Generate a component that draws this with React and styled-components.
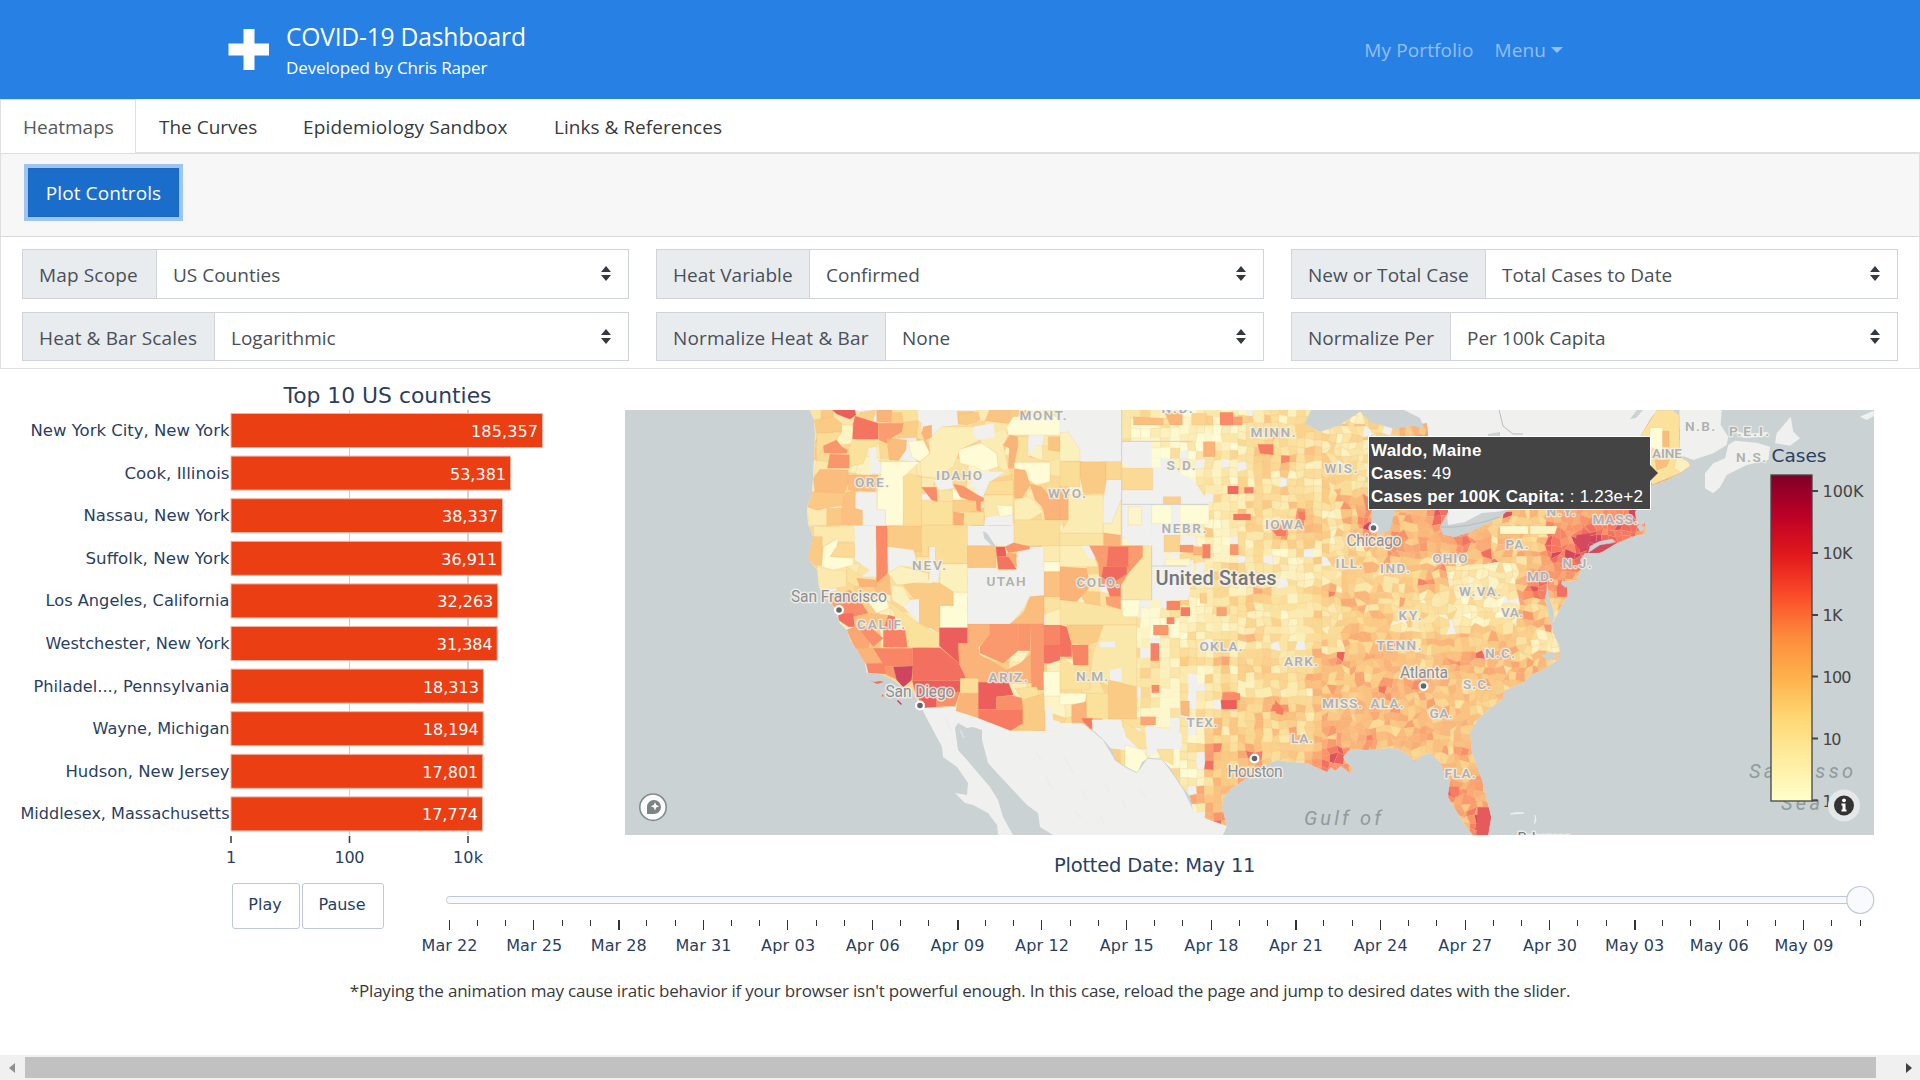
import React from "react";
import styled, { createGlobalStyle } from "styled-components";

const UI = '"Open Sans", "Noto Sans", sans-serif';
const PLOT = '"DejaVu Sans", Verdana, sans-serif';

const GlobalStyle = createGlobalStyle`
  * { box-sizing: border-box; }
  html, body { margin: 0; padding: 0; background: #fff; overflow: hidden; }
  body { font-family: ${UI}; color: #373a3c; }
`;

const Page = styled.div`
  display: flex;
  flex-direction: column;
  width: 1920px;
  height: 1080px;
  background: #fff;
`;

const T = styled.span`
  font-size: ${(p) => p.$size || 19}px;
  letter-spacing: ${(p) => p.$ls || 0}px;
  line-height: 1;
  white-space: nowrap;
`;

/* ---------- header ---------- */
const Header = styled.header`
  display: flex;
  align-items: center;
  justify-content: space-between;
  height: 99px;
  flex: none;
  padding: 0 357px 0 228px;
  background: #2780e3;
  color: #fff;
`;
const Brand = styled.div`
  display: flex;
  align-items: center;
  gap: 17px;
`;
const BrandText = styled.div`
  display: flex;
  flex-direction: column;
  gap: 10px;
  padding-top: 2px;
`;
const NavLinks = styled.nav`
  display: flex;
  align-items: center;
  gap: 21px;
  color: rgba(255, 255, 255, 0.5);
  padding-top: 2px;
`;
const MenuLink = styled.span`
  display: flex;
  align-items: center;
  gap: 5px;
`;
const Caret = styled.i`
  border: 6px solid transparent;
  border-top-color: currentColor;
  border-bottom: 0;
  margin-top: -2px;
`;

/* ---------- tabs ---------- */
const Tabs = styled.div`
  display: flex;
  height: 54px;
  flex: none;
  border-bottom: 1px solid #dddfe2;
`;
const Tab = styled.div`
  display: flex;
  align-items: center;
  width: ${(p) => p.$w}px;
  padding: ${(p) => (p.$active ? 1 : 3)}px 0 0 ${(p) => (p.$active ? 22 : 23)}px;
  height: ${(p) => (p.$active ? 54 : 53)}px;
  border: solid #dddfe2;
  border-width: ${(p) => (p.$active ? "1px 1px 0 1px" : "0")};
  color: ${(p) => (p.$active ? "#55595c" : "#373a3c")};
  background: #fff;
`;

/* ---------- controls card ---------- */
const Card = styled.section`
  flex: none;
  height: 216px;
  border: 1px solid #dfdfdf;
  border-top-width: 0;
`;
const CardHeader = styled.div`
  height: 84px;
  padding: 14px 27px;
  background: #f7f7f7;
  border-top: 1px solid #dfdfdf;
  border-bottom: 1px solid #d8d8d8;
`;
const PlotButton = styled.button`
  display: flex;
  align-items: center;
  justify-content: center;
  width: 151px;
  height: 49px;
  margin: 0;
  padding: 2px 0 0;
  border: 1px solid #1967be;
  background: #1a6dca;
  color: #fff;
  font-family: ${UI};
  box-shadow: 0 0 0 4px #9dc5f3;
`;
const Fields = styled.div`
  display: grid;
  grid-template-columns: 607px 608px 607px;
  grid-template-rows: 50px 49px;
  gap: 13px 27px;
  padding: 12px 21px 0;
`;
const Field = styled.div`
  display: flex;
  border: 1px solid #ced4da;
`;
const Addon = styled.div`
  display: flex;
  align-items: center;
  width: ${(p) => p.$w}px;
  padding: 3px 0 0 16px;
  background: #e9ecef;
  border-right: 1px solid #ced4da;
  color: #495057;
`;
const Select = styled.div`
  display: flex;
  flex: 1;
  align-items: center;
  justify-content: space-between;
  padding: 3px 16px 0 16px;
  color: #495057;
  svg { margin-top: -3px; }
`;

/* ---------- plot ---------- */
const PlotArea = styled.section`
  display: flex;
  height: 505px;
  flex: none;
`;
const MapColumn = styled.div`
  display: flex;
  flex-direction: column;
  padding-top: 41px;
  width: 1249px;
`;
const MapFrame = styled.div`
  position: relative;
  flex: none;
  height: 425px;
  overflow: hidden;
  background: #cad2d3;
  svg { display: block; }
`;
const DateTitle = styled.div`
  display: flex;
  padding: 21px 0 0 429px;
  color: #2a3f5f;
  font-family: ${PLOT};
`;
const Tooltip = styled.div`
  position: absolute;
  left: 743px;
  top: 26px;
  width: 283px;
  height: 74px;
  padding: 2px 3px 0 2px;
  border: 1px solid #fff;
  background: #444;
  color: #fff;
  font: 17px/23px "Liberation Sans", Arial, sans-serif;
  letter-spacing: 0.22px;
  white-space: nowrap;
  &::after {
    content: "";
    position: absolute;
    left: 281px;
    top: 28px;
    border: 8px solid transparent;
    border-left-color: #444;
    border-right: 0;
  }
`;
const ControlRow = styled.div`
  display: flex;
  height: 92px;
  flex: none;
  padding: 9px 0 0 232px;
`;
const PlayButton = styled.button`
  display: flex;
  justify-content: center;
  width: ${(p) => p.$w}px;
  height: 46px;
  margin: 0 2px 0 0;
  padding: 13px 2px 0 0;
  border: 1px solid #bec8d9;
  border-radius: 3px;
  background: #fff;
  color: #2a3f5f;
  font-family: ${PLOT};
`;
const SliderSvg = styled.svg`
  display: block;
  margin-left: 44px;
  overflow: visible;
`;
const Note = styled.p`
  display: flex;
  justify-content: center;
  margin: 0;
  padding-top: 16px;
  flex: 1;
`;
const ScrollBar = styled.footer`
  display: flex;
  align-items: center;
  justify-content: space-between;
  flex: none;
  height: 25px;
  padding: 0 8px 0 9px;
  background: #f0f0f0;
`;
const ScrollThumb = styled.div`
  width: 1851px;
  height: 21px;
  margin-right: 20px;
  background: #c1c1c1;
`;
const ScrollArrow = styled.i`
  border: solid transparent;
  border-width: 5.5px 6px;
  ${(p) => (p.$right
    ? "border-left-color:#404040;border-right-width:0;"
    : "border-right-color:#909090;border-left-width:0;")}
`;

/* ---------- map data ---------- */
const RAMP = [
  [240, 240, 239], [253, 252, 214], [251, 241, 190], [250, 225, 156], [250, 203, 133],
  [250, 179, 121], [250, 150, 108], [247, 122, 98], [236, 94, 92], [207, 68, 97],
];
const shade = (v) => {
  if (v <= 0) return "rgb(240,240,239)";
  const c = Math.min(9, Math.max(1, v));
  const i = Math.min(8, Math.floor(c));
  const f = c - i;
  return `rgb(${RAMP[i].map((a, k) => Math.round(a + (RAMP[i + 1][k] - a) * f)).join(",")})`;
};
const hash = (a, b, s) => {
  let h = (Math.imul(a + 101, 374761393) + Math.imul(b + 57, 668265263) + Math.imul(s, 2246822519)) | 0;
  h = Math.imul(h ^ (h >>> 13), 1274126177);
  h ^= h >>> 16;
  return ((h >>> 0) % 10000) / 10000;
};

const USA =
  "810,410 814,420 815,433 814,460 813,480 812,495 807,507 808,523 813,537 808,558 817,570 819,587 825,597 833,605 838,617 840,623 847,630 850,640 857,650 865,663 867,673 880,674 893,680 903,687 913,692 917,700 922,708 956,706 956,711 978,718 1011,731 1058,731 1058,723 1082,723 1092,730 1103,740 1112,750 1115,760 1125,767 1137,773 1142,762 1148,758 1162,759 1170,768 1182,787 1190,797 1193,810 1207,819 1227,826 1222,808 1223,798 1232,788 1247,778 1260,768 1277,760 1293,762 1307,763 1320,769 1327,772 1331,767 1335,771 1341,766 1350,773 1353,769 1345,761 1343,757 1348,751 1357,749 1367,750 1390,748 1401,750 1408,755 1415,761 1423,755 1430,753 1440,762 1443,770 1450,780 1448,797 1457,812 1465,825 1473,835 1488,835 1491,817 1482,780 1472,753 1470,733 1477,720 1490,708 1502,700 1505,690 1523,683 1530,675 1543,670 1560,658 1560,648 1553,633 1552,627 1550,622 1553,623 1560,608 1567,597 1567,587 1563,583 1577,580 1582,567 1580,560 1585,553 1600,553 1617,543 1637,535 1646,534 1645,523 1641,525 1637,523 1635,512 1652,485 1667,480 1680,473 1691,465 1680,455 1679,415 1673,410 1657,410 1650,420 1640,437 1640,470 1600,500 1510,509 1505,513 1500,517 1470,532 1455,537 1444,534 1440,527 1448,512 1448,490 1420,440 1428,436 1427,423 1395,428 1372,422 1360,412 1340,425 1320,432 1305,424 1311,410";

const SPOTS = [
  [1366, 524, 9, 4.4], [1373, 530, 7, 3], [1440, 516, 9, 4.2], [1586, 545, 12, 4], [1576, 562, 15, 2.2], [1553, 563, 22, 1.8],
  [1630, 520, 14, 3], [1605, 533, 15, 2.2], [1536, 588, 10, 3.8], [1425, 685, 9, 2.6], [1336, 754, 10, 3.3],
  [1327, 765, 14, 1.4], [1255, 757, 8, 4.4], [1229, 702, 8, 4.8], [1217, 747, 6, 4.4], [1206, 763, 5, 4.6],
  [1284, 461, 7, 4], [1265, 450, 8, 3.4], [1281, 532, 7, 4],
  [1301, 516, 5, 4], [1262, 592, 7, 3.2], [1330, 592, 7, 4.6], [1424, 581, 7, 2.6], [1403, 602, 6, 3], [1390, 639, 9, 2.6],
  [1339, 658, 5, 4.6], [1384, 690, 7, 2.7], [1483, 823, 12, 3.6], [1453, 790, 8, 2.5], [1478, 657, 5, 3.4], [1491, 557, 7, 2.8],
  [1464, 537, 7, 2.6], [1444, 570, 6, 3.4], [1370, 500, 9, 3.6], [1508, 513, 5, 4], [1552, 541, 9, 2], [1560, 590, 8, 2.4],
  [1311, 680, 6, 2.6], [1278, 708, 6, 3.4], [1222, 658, 8, 3], [1247, 640, 6, 2.6], [1366, 742, 6, 2.3],
  [1197, 797, 10, 3.5],
  [1218, 822, 10, 3.5], [1395, 552, 9, 1.6], [1465, 750, 6, 2.4], [1345, 500, 10, 2], [1314, 530, 12, 2.2],
  [1528, 616, 4, 3], [1550, 628, 5, 2.8], [1500, 645, 8, 1.8], [1455, 665, 8, 1.5], [1425, 725, 8, 1.4], [1310, 448, 7, 0.8],
];
const base = (x, y) => {
  if (x < 1120) return [2.9, 0.08];
  if (y > 765 && x > 1430) return [4.9, 0];
  if (x < 1205) {
    if (y < 460) return [2, 0.12];
    if (y < 580) return [2.1, x < 1180 ? 0.3 : 0.12];
    if (y < 700) return [2.4, x > 1180 && y > 650 ? 0.35 : 0.08];
    return y > 755 ? [2.3, 0.1] : [2.2, 0.4];
  }
  if (x < 1240) return y < 560 ? [2.4, 0.04] : y > 715 ? [3.6, 0] : [2.8, 0.04];
  if (x < 1315) return y < 480 ? [2.8, 0.02] : y < 550 ? [3.1, 0.02] : y < 650 ? [2.6, 0.05] : y < 700 ? [3.1, 0.02] : [4, 0];
  if (x < 1400 && y < 500) return [2.9, 0.03];
  if (y > 650) return x > 1420 ? [4.2, 0] : [4.4, 0];
  if (x < 1345) return y > 600 ? [3.2, 0.02] : [2.7, 0.01];
  if (x > 1395 && x < 1455 && y > 590 && y < 630) return [2.6, 0.03];
  if (x > 1445 && x < 1520 && y > 565 && y < 625) return [2.3, 0.02];
  if (x > 1490 && y < 555) return x < 1545 ? [3.7, 0] : [5.4, 0];
  if (x > 1535 && y > 630) return [2.6, 0];
  if (y < 560 && x > 1385) return [4.9, 0];
  return [3.9, 0];
};
const CELLS = (() => {
  const out = [];
  const grid = (x0, x1, w, h, jit, seed, merge = 0) => {
    const n = Math.round((x1 - x0) / w);
    const rows = Math.ceil(430 / h);
    const vx = (i, j) => [
      x0 + i * w + (i > 0 && i < n ? (hash(i, j, seed) - 0.5) * w * jit : 0),
      408 + j * h + (hash(i, j, seed + 1) - 0.5) * h * jit,
    ];
    for (let i = 0; i < n; i++) {
      for (let j = 0; j < rows; j++) {
        const x = x0 + (i + 0.5) * w;
        const y = 408 + (j + 0.5) * h;
        const [b, miss] = base(x, y);
        const joined = hash(i, j, seed + 5);
        const ci = joined < merge ? i - 1 : i;
        const cj = joined > 1 - merge ? j - 1 : j;
        let v = b + (hash(ci, cj, seed + 2) + hash(ci, cj, seed + 3) - 1) * 1.7;
        SPOTS.forEach(([sx, sy, r, a]) => {
          const d = ((x - sx) ** 2 + (y - sy) ** 2) / (r * r);
          if (d < 6) v += a * Math.exp(-d);
        });
        v = hash(ci, cj, seed + 4) < miss ? 0 : Math.max(1, v);
        const pts = [vx(i, j), vx(i + 1, j), vx(i + 1, j + 1), vx(i, j + 1)];
        out.push([pts.map((p) => `${p[0].toFixed(1)},${p[1].toFixed(1)}`).join(" "), shade(v), v === 0 || ci !== i || cj !== j]);
      }
    }
  };
  grid(800, 1121, 18.9, 17, 0.55, 3);
  grid(1121, 1180, 9.83, 10, 0.1, 17, 0.28);
  grid(1180, 1238, 8.3, 8.6, 0.22, 21, 0.15);
  grid(1238, 1322, 8.4, 7.8, 0.42, 29, 0.12);
  grid(1322, 1700, 7, 6.8, 0.8, 43, 0.1);
  return out;
})();

const WEST = [
  ["583,60 640,50 665,70 665,95 590,100", 4], ["637,30 705,30 708,45 690,58 670,50 650,42", 8], ["705,48 775,70 775,118 697,118 700,70", 7.2],
  ["775,70 850,70 845,95 820,110 800,130 778,120", 5.8], ["770,30 815,30 815,68 770,65", 5], ["815,38 845,38 850,70 815,70", 4],
  ["590,100 665,95 650,120 610,138 590,180", 3.2], ["697,118 778,120 768,140 745,145 730,190 690,200 685,150", 3],
  ["800,115 860,120 858,150 835,182 808,180", 4.6], ["610,138 650,120 665,140 683,150 680,160 640,160 612,158", 6], ["630,162 688,165 688,205 622,205", 6],
  ["600,208 685,210 685,250 670,285 585,280 580,235", 4.6], ["575,275 672,280 672,315 590,330 560,320", 4.1], ["620,325 665,325 665,376 620,376", 4.1],
  ["665,325 675,280 705,270 705,325 728,330 728,376 665,376", 4.4], ["685,225 775,225 765,275 685,270", 4.6], ["708,277 770,277 770,328 797,330 797,376 728,376 728,330 708,325", 0],
  ["745,145 768,140 770,180 783,188 783,222 750,220 752,190", 0], ["783,185 900,185 850,230 850,376 797,376 797,330 772,328 772,275 783,222", 1],
  ["850,230 870,222 905,232 905,376 850,376", 3.2], ["865,125 910,120 930,160 900,185 875,170", 1], ["905,30 1010,30 1015,75 965,80 925,115 905,90", 0],
  ["900,185 930,160 925,120 965,80 1060,80 1080,120 1020,150 1000,200 945,235 905,230", 2.2],
  ["1080,120 1150,85 1165,105 1150,135 1165,205 1155,215 1135,200 1130,160 1085,130", 2.3],
  ["905,232 945,235 940,262 905,262", 2.4], ["952,270 997,270 998,305 952,305", 2.8],
  ["1015,45 1075,35 1080,60 1040,75 1015,70", 4], ["1060,80 1120,70 1125,110 1080,120 1060,110", 0], ["910,80 935,75 935,110 915,122 905,100", 5],
  ["1015,150 1060,135 1085,130 1130,160 1135,200 1090,215 1065,200 1020,190", 1], ["1085,215 1155,215 1110,245 1090,290 1065,290 1065,260 1040,265", 0],
  ["940,240 995,235 1000,265 960,270", 0], ["1110,245 1180,240 1180,285 1092,285", 3.2], ["1092,285 1180,285 1178,345 1140,350 1092,350", 2.6],
  ["905,300 998,305 998,376 905,376", 3], ["905,262 950,262 952,305 935,300", 6.4], ["997,265 1020,275 1025,300 998,300", 1],
  ["1000,300 1070,300 1070,335 1000,335", 3.8], ["1030,338 1092,335 1092,376 1030,376", 3],
  ["1000,252 1030,258 1065,280 1092,295 1090,305 1045,300 1020,290", 6], ["1068,300 1082,300 1082,335 1070,330", 6], ["1000,335 1032,340 1030,376 1000,376", 5.2],
  ["1095,350 1178,345 1178,376 1093,376", 0], ["1130,315 1178,318 1178,345 1140,350", 1], ["1160,80 1180,50 1300,45 1320,60 1320,105 1165,105", 1],
  ["1193,110 1225,110 1225,170 1290,187 1183,187", 3],
  ["1170,105 1193,110 1193,140 1180,205 1165,205 1168,145 1150,135", 5], ["1225,110 1250,105 1250,135 1225,170", 0], ["1285,110 1320,110 1320,155 1285,150", 4.3],
  ["1183,187 1290,187 1290,245 1250,255 1225,240 1220,215 1183,205", 1], ["1183,207 1215,210 1230,255 1205,295 1183,295", 4.8],
  ["1230,252 1265,260 1290,290 1320,300 1320,360 1275,360 1270,325 1245,300", 5], ["1183,300 1220,290 1240,300 1270,335 1230,360 1183,360", 2.2],
  ["1183,360 1320,360 1320,437 1183,437", 3.1],
  ["560,320 590,330 620,330 620,376 568,376", 2.4],
  ["580,380 703,378 705,425 655,425 650,415 610,440 582,410", 2.5], ["578,410 607,410 605,498 585,495 565,475", 4], ["655,430 705,428 705,470 630,472", 3.3],
  ["590,500 640,510 680,510 680,560 597,570", 2.5], ["680,500 725,530 768,530 768,545 710,560 680,545", 3],
  ["610,440 655,415 650,440 630,470 700,475 700,495 640,510 605,500", 1], ["703,378 768,378 768,530 725,530 750,510 705,480", 0], ["768,378 802,378 803,520 770,548", 6.4],
  ["802,378 905,378 905,455 880,455 802,440", 4], ["905,376 1043,376 1043,492 945,492 945,440 925,440 925,470 905,470", 3.2],
  ["803,440 880,450 890,485 880,500 840,497 805,520", 0], ["928,440 945,440 945,492 960,500 955,545 928,545", 0], ["805,520 840,498 925,520 925,545 880,550 830,555", 2],
  ["890,470 928,470 928,520 880,505", 2.6],
  ["960,492 1043,492 1043,577 1000,577 960,550", 2], ["850,555 880,550 960,550 1000,575 1000,615 960,615 960,700 895,665 897,615", 4],
  ["1000,577 1043,577 1043,683 960,683 960,617 1000,617", 1], ["815,555 850,560 870,600 850,622 815,600", 2], ["897,597 870,600 850,620 897,670", 0],
  ["800,600 895,670 960,705 960,742 862,742 858,690 830,650", 3], ["710,535 770,540 770,560 720,560", 5], ["740,600 800,590 805,625 770,640", 1],
  ["630,590 690,570 725,610 665,635 635,615", 5.6], ["665,610 725,610 745,640 700,650 665,635", 6.4], ["655,640 700,640 705,680 685,680 655,660", 7.4],
  ["700,650 745,640 805,645 790,690 750,680 720,690 705,680", 4.4],
  ["680,690 705,680 750,720 745,745 705,745", 5.4], ["720,690 750,680 790,715 760,740", 6.3], ["805,645 825,650 825,690 790,690", 7], ["790,690 855,690 862,742 790,742", 6.8],
  ["705,745 760,745 795,790 735,790", 5], ["760,745 877,745 877,798 795,800", 6.6], ["738,790 792,790 800,822 745,820", 6.6], ["795,800 820,800 830,838 800,825", 6],
  ["877,743 960,743 1017,790 1038,835 1025,842 877,842", 7.4], ["958,683 1043,683 1043,730 1015,730 1017,790 958,738", 8], ["877,842 1022,842 1022,875 890,895", 8],
  ["890,875 950,890 950,922 905,925", 8], ["950,880 1020,875 1005,918 950,920", 6.2], ["820,800 878,798 875,840 850,862 830,840", 9],
  ["1043,378 1180,378 1180,437 1043,437", 0], ["1043,437 1128,437 1128,503 1043,503", 4.3],
  ["1043,505 1128,505 1135,512 1192,510 1192,450 1232,440 1272,440 1272,585 1230,590 1200,640 1170,672 1043,672", 0],
  ["1155,440 1180,428 1230,440 1228,448 1165,458", 6], ["1160,458 1188,462 1190,500 1165,490", 5.2], ["1128,440 1155,440 1160,470 1130,470", 8], ["1130,470 1165,470 1190,508 1135,508", 7.2],
  ["1230,590 1272,587 1272,672 1170,672 1210,640", 4.6], ["1272,437 1320,437 1320,485 1272,485", 2.4], ["1272,485 1320,485 1320,515 1272,515", 1], ["1272,515 1320,515 1320,590 1272,590", 4.4],
  ["1043,672 1110,672 1110,700 1075,740 1080,765 1110,780 1160,810 1200,790 1235,760 1237,850 1075,850 1038,835 1017,790 1017,730 1043,730", 5],
  ["1110,672 1195,672 1197,750 1150,790 1080,760 1080,740 1110,700", 5.9], ["1195,672 1230,672 1230,752 1197,752", 6], ["1230,672 1272,672 1272,870 1235,870 1232,752", 5.9],
  ["1272,675 1320,675 1320,733 1272,733", 6.6], ["1272,733 1320,733 1320,780 1290,790 1272,790", 7.2], ["1020,835 1075,835 1075,880 1020,880", 3.2], ["1020,880 1075,880 1075,953 1008,932", 5],
  ["1185,865 1250,860 1265,900 1208,900", 3], ["1208,900 1272,880 1275,992 1180,990 1208,970", 4], ["1075,847 1165,847 1180,885 1130,890 1128,928 1075,928", 8],
  ["1130,890 1180,887 1205,895 1208,927 1128,927", 6.2], ["1075,928 1208,928 1208,970 1172,992 1075,955", 7], ["1270,815 1320,815 1320,888 1272,888", 1],
  ["1276,915 1295,920 1300,960 1320,965 1320,992 1276,992", 0],
];
const MID = [
  ["0,30 185,30 185,183 60,183 50,140 0,95", 0], ["0,100 25,95 60,150 60,183 0,183", 2], ["60,185 138,185 138,280 70,280 60,230", 4], ["0,185 60,185 60,260 0,260", 3.2],
  ["138,185 183,185 183,240 138,240", 3.4],
  ["0,260 25,300 25,360 0,360", 5], ["25,285 130,285 130,400 0,400 25,360", 2.3], ["140,240 183,240 183,300 155,370 130,370 130,300", 0], ["130,398 182,405 182,437 130,437", 5],
  ["0,400 130,400 130,437 0,437", 2.8], ["155,370 183,300 183,405 130,398 130,370", 2.2], ["0,437 88,437 115,500 0,500", 2.2], ["65,437 88,437 110,475 85,475", 0],
  ["183,437 275,437 275,600 183,600", 2.6], ["0,500 80,505 90,560 50,605 0,600", 5], ["88,437 248,437 248,470 205,520 180,560 120,560 115,490", 5.8],
  ["145,440 205,440 205,500 140,500", 7.2], ["130,500 200,500 200,522 155,550 125,530", 7.6], ["138,555 182,555 182,590 150,590", 7],
  ["0,600 50,605 135,620 230,630 230,675 0,675", 2.8], ["137,590 182,590 182,628 140,615", 5.6], ["182,600 240,600 235,650 190,650", 1],
  ["0,675 20,680 35,735 35,770 0,770", 7.3], ["20,675 130,675 125,720 85,735 35,730", 4], ["130,675 230,675 230,860 150,860 90,830 100,760", 2.6],
  ["35,735 85,735 85,795 40,795", 6.6], ["0,770 40,795 90,800 90,870 0,870", 3], ["120,725 165,725 165,742 120,742", 0], ["150,810 185,805 185,845 150,840", 0],
  ["145,840 230,860 230,957 145,957", 4], ["0,880 80,880 75,910 0,915", 1], ["80,880 145,880 145,955 80,955", 3], ["35,915 78,905 78,968 35,968", 5], ["65,955 97,955 95,990 70,965", 7],
  ["185,125 275,125 275,210 185,190", 0], ["275,205 330,205 400,240 450,313 275,313 275,270", 0], ["185,270 275,270 275,313 185,313", 0],
  ["185,313 275,313 275,437 205,430 185,370", 0], ["275,315 335,315 335,370 275,370", 1], ["205,320 245,320 245,375 205,375", 1.6],
  ["360,315 447,315 447,375 360,370", 1], ["335,315 360,315 360,430 275,437 275,370 335,370", 0], ["275,437 315,437 315,490 400,480 400,498 385,600 275,600", 0],
  ["310,290 362,290 362,313 310,313", 3.8], ["315,478 390,475 390,498 315,498", 1.4],
  ["95,960 185,960 190,1000 260,1040 255,1070 195,1050 150,1045 100,995", 0],
  ["185,960 290,1030 290,1050 235,1045 200,1010", 3], ["195,1035 250,1050 262,1075 230,1118 195,1100", 1], ["185,205 278,205 278,270 185,270", 3.3], ["220,50 310,55 310,75 220,75", 4.5],
  ["255,975 365,1000 365,1045 262,1068", 0], ["290,1048 340,1048 340,1095 305,1078", 3],
  ["315,40 367,40 367,75 330,75", 5], ["430,125 465,125 465,170 430,170", 5], ["320,603 360,603 360,630 320,630", 6.6], ["362,622 390,622 390,648 362,648", 7], ["320,652 343,652 343,672 320,672", 6.6],
  ["280,675 325,675 325,705 280,705", 6], ["272,730 297,730 297,782 272,782", 6.8], ["275,855 298,855 298,878 275,878", 6.4], ["242,950 287,950 287,975 242,975", 5.4], ["362,903 388,903 388,950 362,945", 4.8],
  ["312,405 360,405 360,455 312,455", 3.6], ["360,435 400,435 400,458 360,456", 6], ["427,433 451,433 451,475 427,475", 6.8], ["400,440 427,440 427,465 400,465", 5], ["510,433 535,433 535,465 510,465", 6],
  ["480,37 520,37 520,75 480,75", 6.4], ["520,50 547,50 547,75 520,75", 5.6], ["395,40 440,40 440,75 395,75", 3.6], ["593,133 640,133 640,165 600,160", 7],
  ["503,258 535,258 535,282 503,282", 7.6], ["553,262 580,262 580,280 553,280", 7], ["520,342 572,342 572,360 520,360", 7.2], ["635,388 678,388 678,408 650,408", 7],
  ["470,622 500,622 500,648 470,648", 5.6], ["420,580 440,580 440,610 420,610", 3.8], ["715,335 735,335 735,360 715,360", 7],
  ["482,900 530,900 530,927 485,927", 8], ["490,880 540,880 540,900 490,900", 6.4], ["645,900 672,930 668,945 648,940", 7], ["1162,1160 1197,1160 1197,1185 1175,1192", 7], ["1253,1222 1292,1222 1290,1305 1250,1305", 8.2],
];
const EAST = [
  ["480,110 530,30 580,30 597,45 600,165 633,195 600,220 515,255 505,200", 3], ["510,83 548,83 548,160 510,140", 1], ["548,93 567,93 567,140 548,140", 4.6], ["525,180 568,180 560,200 530,210", 4.5], ["590,175 625,180 630,200 605,218 582,205", 2],
  ["320,440 385,432 410,428 370,455 320,465", 8.8], ["290,405 330,400 330,430 300,450 285,430", 8.8], ["245,540 262,555 260,590 232,590 230,560", 7.4], ["60,378 145,378 145,402 60,402", 1.3], ["150,378 232,378 225,402 150,402", 1.8],
];

const STATES = [
  ["MONT.", 1043, 415, 47], ["N.D.", 1177, 408, 31], ["ORE.", 872, 482, 34], ["IDAHO", 959, 475, 46], ["WYO.", 1067, 493, 38], ["S.D.", 1181, 465, 29],
  ["MINN.", 1273, 432, 45], ["WIS.", 1341, 468, 33], ["NEV.", 929, 565, 34], ["UTAH", 1006, 581, 39], ["COLO.", 1098, 582, 43], ["NEBR.", 1184, 528, 45], ["IOWA", 1284, 524, 38],
  ["ILL.", 1349, 563, 27], ["IND.", 1395, 568, 30], ["OHIO", 1450, 558, 35], ["PA.", 1517, 544, 23], ["N.Y.", 1561, 511, 29], ["MASS.", 1615, 519, 45], ["MD.", 1540, 576, 26],
  ["N.J.", 1577, 563, 29], ["W.VA.", 1480, 591, 42], ["VA.", 1512, 612, 22], ["KY.", 1410, 615, 23], ["N.C.", 1500, 653, 30], ["TENN.", 1399, 645, 45], ["CALIF.", 881, 624, 48],
  ["ARIZ.", 1008, 677, 39], ["N.M.", 1092, 676, 32], ["OKLA.", 1221, 646, 43], ["ARK.", 1301, 661, 34], ["S.C.", 1477, 684, 28], ["MISS.", 1342, 703, 40], ["ALA.", 1387, 703, 33],
  ["GA.", 1441, 713, 23], ["TEX.", 1202, 722, 31], ["LA.", 1302, 738, 22], ["FLA.", 1460, 773, 31], ["MAINE", 1661, 453, 42], ["N.B.", 1700, 426, 30], ["P.E.I.", 1749, 431, 40], ["N.S.", 1751, 457, 30],
];
const CITIES = [
  ["San Francisco", 839, 597, 96, 839, 610], ["San Diego", 920, 692, 69, 920, 705.5], ["Chicago", 1374, 540.5, 55, 1373.5, 528],
  ["Atlanta", 1424, 673, 48, 1423.5, 686], ["Houston", 1255, 771.5, 55, 1254.5, 758.5],
];

const Shapes = ({ list, dx }) => (
  <g transform={`translate(${dx} 400) scale(.33333)`} stroke="#f99a5c" strokeWidth="1.6">
    {list.map(([p, v], i) => <polygon key={i} points={p} fill={shade(v)} strokeOpacity={v ? 0.28 : 0} />)}
  </g>
);

function HeatMap() {
  return (
    <svg width="1249" height="425" viewBox="625 410 1249 425">
      <defs>
        <clipPath id="usa"><polygon points={USA} /></clipPath>
        <linearGradient id="ylorrd" x1="0" y1="0" x2="0" y2="1">
          {["#800026", "#bd0026", "#e31a1c", "#fc4e2a", "#fd8d3c", "#feb24c", "#fed976", "#ffeda0", "#ffffcc"].map((c, i) => (
            <stop key={c} offset={i / 8} stopColor={c} />
          ))}
        </linearGradient>
      </defs>
      <g fill="#f0f0ef">
        <polygon points="922,708 956,707 956,711 978,718 1011,731 1058,731 1058,723 1082,723 1103,740 1115,760 1137,773 1148,758 1162,759 1182,787 1193,810 1227,826 1223,835 1053,835 1040,827 1038,813 1027,805 1013,790 997,773 988,763 982,740 982,730 973,727 967,728 958,723 955,728 958,750 967,760 978,773 990,787 998,800 1003,817 1013,835 998,835 997,825 988,813 973,805 965,803 955,793 967,795 968,783 957,767 943,757 942,747 933,730 925,715" />
        <polygon points="1311,410 1320,410 1400,410 1422,410 1657,410 1650,420 1640,437 1640,470 1505,510 1470,522 1448,525 1446,505 1430,440 1422,434 1420,420 1405,412" />
        <g transform="translate(1480 400) scale(.33333)">
          <polygon points="598,30 725,30 722,75 745,110 740,135 700,160 640,180 600,165" />
          <polygon points="745,135 765,122 830,128 870,140 865,180 800,195 740,225 720,262 700,280 675,265 675,220 700,190 735,175" />
          <polygon points="885,130 890,100 932,50 940,95 960,115 930,137" />
          <polygon points="755,88 800,103 865,95 850,110 790,114" />
          <polygon points="1140,50 1180,32 1182,48 1160,60" />
          <path d="M92 1242l15-4 24 1-20 2zM165 1245l3 15-5 12" stroke="#f0f0ef" strokeWidth="3" />
        </g>
        <polygon points={USA} />
      </g>
      <g stroke="#e8e9e9" strokeWidth="1.6" fill="none" opacity=".6">
        <path d="M945 715l4 12 3 6M1064 757l6 9 3 8M1082 790l5 10M1036 752l5 8M1046 775l3 9 5 6M1105 785l5 8M1122 800l4 9M1140 790l6 8M1075 812l6 6M1100 815l4 8M960 730l4 8" />
      </g>
      <g clipPath="url(#usa)">
        <g stroke="#f9a868" strokeWidth=".6">
          {CELLS.map(([p, c, quiet], i) => (
            <polygon key={i} points={p} fill={c} stroke={quiet ? c : undefined} strokeOpacity={quiet ? 1 : 0.26} />
          ))}
        </g>
        <Shapes list={WEST} dx={620} />
        <Shapes list={MID} dx={1060} />
        <Shapes list={EAST} dx={1480} />
      </g>
      <g transform="translate(1060 400) scale(.33333)" stroke="#cfd2d4" strokeWidth="3" fill="none">
        <path d="M185 30V437M185 124H400M185 313H445M275 437V600M275 498H380M97 990L130 1020 155 1050 165 1080 195 1100 230 1118M262 1075L305 1078 330 1105 365 1160 390 1190" />
      </g>
      <g fill="#cad2d3">
        <polygon points="983,531 987,533 995,545 993,547 984,538" />
        <polygon points="1322,410 1311,410 1305,423 1320,426 1333,419 1346,417 1360,411 1370,422 1395,429 1412,426 1424,428 1420,418 1404,410" />
        <polygon points="1372,505 1371,527 1380,534 1390,530 1395,510 1395,500" />
        <polygon points="1440,527 1443,535 1455,537 1470,532 1500,517 1506,511 1482,513 1465,522 1450,525" />
        <polygon points="1547,582 1550,600 1554,613 1552,627 1549,617 1546,600" />
        <polygon points="1588,553 1600,545 1616,542 1612,539 1600,541 1590,546" />
        <polygon points="1640,524 1645,528 1641,532 1637,527" />
        <polygon points="1541,655 1552,652 1558,656 1548,661" />
        <polygon points="1562,580 1568,583 1566,588 1561,584" />
        <polygon points="1368,753 1370,746 1372,755" />
        <polygon points="1630,419 1637,410 1643,410 1636,418" />
        <polygon points="1488,434 1500,432 1500,436 1488,436" />
      </g>
      <path d="M1440 527Q1465 529 1500 517M1499 410l4 16 10 8h10" stroke="#b4bec1" fill="none" />
      <g fill="#ee7450">
        <path d="M869 680l5 2 6-1 4 1-7 2zM882 694l2 2-2 1z" />
        <path d="M898 700l4 4-1 1-4-4z" fill="#c93a55" />
      </g>
      <g fontFamily='Roboto, "Open Sans", sans-serif' textAnchor="middle" paintOrder="stroke" stroke="#f4f3ec" strokeOpacity=".8" strokeLinejoin="round">
        <g fontSize="13.6" fontWeight="600" fill="#adb0b3" strokeWidth="2.6">
          {STATES.map(([t, x, y, w]) => <text key={t} x={x} y={y + 5} textLength={w}>{t}</text>)}
        </g>
        <g fontSize="15.6" fill="#8b8f92" strokeWidth="3">
          {CITIES.map(([t, x, y, w]) => <text key={t} x={x} y={y + 5.2} textLength={w}>{t}</text>)}
        </g>
        <text x="1216" y="585" fontSize="20" fontWeight="500" fill="#73777b" strokeWidth="3.5" textLength="121">United States</text>
        <text x="1544.5" y="843" fontSize="15" fill="#777b7e" strokeWidth="3" textLength="54">Bahamas</text>
      </g>
      <g fontFamily='Roboto, "Open Sans", sans-serif' fontStyle="italic" fill="#8f9b9c" fontSize="20">
        <text x="1304" y="824.5" textLength="77">Gulf of</text>
        <text x="1749" y="777.5" textLength="104">Sargasso</text>
        <text x="1781" y="809.5" textLength="39">Sea</text>
      </g>
      {CITIES.map((c) => <circle key={c[0]} cx={c[4]} cy={c[5]} r="3.9" fill="#626668" stroke="#fff" strokeWidth="2.2" />)}

      <rect x="1771" y="475" width="41" height="326" fill="url(#ylorrd)" stroke="#444" strokeWidth="1.3" />
      <g fontFamily={PLOT}>
        <text x="1771.5" y="461.5" fontSize="18.5" fill="#2a3f5f" textLength="55" lengthAdjust="spacingAndGlyphs">Cases</text>
        {[["100K", 491, 41], ["10K", 553, 30], ["1K", 615, 20], ["100", 676.5, 29], ["10", 738.5, 19], ["1", 800.5, 0]].map(([t, y, w]) => (
          <g key={t}>
            <rect x="1812" y={y - 1} width="6" height="2" fill="#444" />
            <text x="1822.5" y={y + 6} fontSize="16" fill="#444" textLength={w || undefined}>{t}</text>
          </g>
        ))}
      </g>
      <circle cx="1844" cy="805.5" r="16" fill="#e4e8e9" />
      <circle cx="1844" cy="805.5" r="10" fill="#333" />
      <circle cx="1844" cy="800.3" r="1.9" fill="#fff" />
      <path d="M1841.5 803.5h4v6h1v2h-5v-2h1v-4h-1z" fill="#fff" />
      <circle cx="653" cy="807.2" r="13.2" fill="#fbfbfb" stroke="#838a8c" strokeWidth="1.6" />
      <path d="M647 814v-6.500a7 7 0 1 1 6.500 6.500z" fill="#7b8485" />
      <path d="M655 802l1.200 3 3 1.200-3 1.200-1.200 3-1.200-3-3-1.200 3-1.200z" fill="#fff" />
    </svg>
  );
}

const BARS = [
  ["New York City, New York", "185,357", 542.5, 199], ["Cook, Illinois", "53,381", 510.5, 105], ["Nassau, New York", "38,337", 502.5, 146],
  ["Suffolk, New York", "36,911", 501.7, 144], ["Los Angeles, California", "32,263", 497.8, 184], ["Westchester, New York", "31,384", 497.2, 184],
  ["Philadel..., Pennsylvania", "18,313", 483.4, 196], ["Wayne, Michigan", "18,194", 483.2, 137], ["Hudson, New Jersey", "17,801", 482.8, 164],
  ["Middlesex, Massachusetts", "17,774", 482.5, 209],
];

function BarChart() {
  return (
    <svg width="625" height="505" viewBox="0 369 625 505" fontFamily={PLOT} fontSize="16" fill="#2a3f5f">
      <text x="283.500" y="402.500" fontSize="21" textLength="208" lengthAdjust="spacingAndGlyphs">Top 10 US counties</text>
      <path d="M349.500 410V835" stroke="#ccc" />
      <path d="M468 410V835" stroke="#c8c8c8" strokeWidth="1.600" />
      {BARS.map(([name, val, end, w], i) => {
        const y = 414 + i * 42.6;
        return (
          <g key={name}>
            <text x="229.500" y={y + 22} textAnchor="end" textLength={w} lengthAdjust="spacingAndGlyphs">{name}</text>
            <rect x="231" y={y - 0.5} width={end - 231} height="34" fill="#ec3e13" stroke="#f0b5a6" strokeWidth="1" />
            <text x={end - 4.5} y={y + 23} textAnchor="end" fill="#fff" textLength={i ? 56 : 67}>{val}</text>
          </g>
        );
      })}
      {[[231, "1"], [349.5, "100"], [468, "10k"]].map(([x, t]) => (
        <g key={t}>
          <rect x={x - 0.8} y="836" width="1.600" height="7" fill="#444" />
          <text x={x} y="863" textAnchor="middle" textLength={t.length > 1 ? 30 : undefined}>{t}</text>
        </g>
      ))}
    </svg>
  );
}

const DATES = ["Mar 22", "Mar 25", "Mar 28", "Mar 31", "Apr 03", "Apr 06", "Apr 09", "Apr 12", "Apr 15", "Apr 18", "Apr 21", "Apr 24", "Apr 27", "Apr 30", "May 03", "May 06", "May 09"];

function Slider() {
  return (
    <SliderSvg width="1490" height="83" viewBox="430 883 1490 83" fontFamily={PLOT} fontSize="16" fill="#2a3f5f">
      <rect x="446.500" y="896.500" width="1414" height="7" rx="3" fill="#f8fafc" stroke="#bec8d9" />
      {Array.from({ length: 51 }, (_, i) => (
        <rect key={i} x={Math.round(448.8 + i * 28.216)} y="920" width={i % 12 === 6 ? 2 : 1} height={i % 3 ? 6 : 10} fill="#333" />
      ))}
      {DATES.map((d, i) => (
        <text key={d} x={449.5 + i * 84.65} y="951" textAnchor="middle" textLength={d[0] === "A" ? 54 : d[2] === "y" ? 59 : 56}>{d}</text>
      ))}
      <circle cx="1860.300" cy="900" r="13.500" fill="#f8fafc" stroke="#bec8d9" strokeWidth="1.200" />
    </SliderSvg>
  );
}

const FIELDS = [
  ["Map Scope", 134, "US Counties", 0.15], ["Heat Variable", 153, "Confirmed", 0.05], ["New or Total Case", 194, "Total Cases to Date", 0.05],
  ["Heat & Bar Scales", 192, "Logarithmic", 0.13], ["Normalize Heat & Bar", 229, "None", 0.18], ["Normalize Per", 159, "Per 100k Capita", 0.03],
];

export default function App() {
  return (
    <Page>
      <GlobalStyle />
      <Header>
        <Brand>
          <svg width="41" height="41" viewBox="0 0 41 41"><path d="M15.500 0h11v14.500H41v12H26.500V41h-11V26.500H.5v-12h15z" fill="#fff" /></svg>
          <BrandText>
            <T $size={24.6} $ls={-0.2}>COVID-19 Dashboard</T>
            <T $size={17} $ls={-0.12}>Developed by Chris Raper</T>
          </BrandText>
        </Brand>
        <NavLinks>
          <T $ls={0.12}>My Portfolio</T>
          <MenuLink><T $ls={0.1}>Menu</T><Caret /></MenuLink>
        </NavLinks>
      </Header>
      <Tabs>
        <Tab $active $w={136}><T>Heatmaps</T></Tab>
        <Tab $w={144}><T>The Curves</T></Tab>
        <Tab $w={251}><T $ls={0.17}>Epidemiology Sandbox</T></Tab>
        <Tab $w={220}><T $ls={0.03}>Links &amp; References</T></Tab>
      </Tabs>
      <Card>
        <CardHeader><PlotButton><T $ls={0.1}>Plot Controls</T></PlotButton></CardHeader>
        <Fields>
          {FIELDS.map(([label, w, value, ls]) => (
            <Field key={label}>
              <Addon $w={w}><T $ls={ls}>{label}</T></Addon>
              <Select>
                <T>{value}</T>
                <svg width="12" height="16" viewBox="0 0 12 16"><path d="M6 0l5 6H1zM1 9h10l-5 6z" fill="#343a40" /></svg>
              </Select>
            </Field>
          ))}
        </Fields>
      </Card>
      <PlotArea>
        <BarChart />
        <MapColumn>
          <MapFrame>
            <HeatMap />
            <Tooltip><b>Waldo, Maine</b><br /><b>Cases</b>: 49<br /><b>Cases per 100K Capita:</b> : 1.23e+2</Tooltip>
          </MapFrame>
          <DateTitle><T $size={19.5} $ls={-0.22}>Plotted Date: May 11</T></DateTitle>
        </MapColumn>
      </PlotArea>
      <ControlRow>
        <PlayButton $w={68}><T $size={16}>Play</T></PlayButton>
        <PlayButton $w={82}><T $size={16}>Pause</T></PlayButton>
        <Slider />
      </ControlRow>
      <Note><T $size={17} $ls={-0.2}>*Playing the animation may cause iratic behavior if your browser isn't powerful enough. In this case, reload the page and jump to desired dates with the slider.</T></Note>
      <ScrollBar>
        <ScrollArrow />
        <ScrollThumb />
        <ScrollArrow $right />
      </ScrollBar>
    </Page>
  );
}
